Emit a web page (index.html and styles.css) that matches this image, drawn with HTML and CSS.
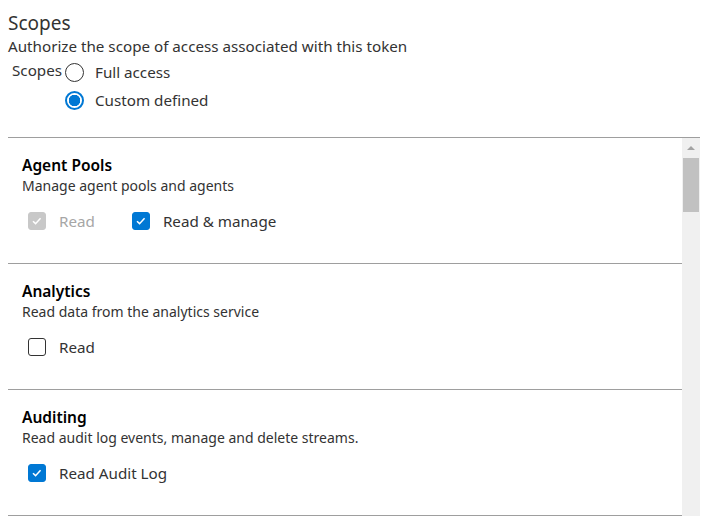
FILE: index.html
```html
<!DOCTYPE html>
<html lang="en">
<head>
  <meta charset="UTF-8">
  <title>Token scopes</title>
  <link rel="stylesheet" href="styles.css">
</head>
<body>
  <div class="scopes-header">
    <h2>Scopes</h2>
    <p class="subtitle">Authorize the scope of access associated with this token</p>
    <div class="scope-choice">
      <span class="choice-label">Scopes</span>
      <div class="radio-group">
        <label class="radio"><span class="radio-dot"></span>Full access</label>
        <label class="radio checked"><span class="radio-dot"></span>Custom defined</label>
      </div>
    </div>
  </div>

  <div class="scope-list">
    <div class="scope-items">
      <div class="scope-item">
        <div class="scope-title">Agent Pools</div>
        <div class="scope-desc">Manage agent pools and agents</div>
        <div class="scope-options">
          <label class="check checked disabled"><span class="box"><svg viewBox="0 0 18 18"><path d="M4.5 9.2l2.9 2.8 5.6-6"/></svg></span>Read</label>
          <label class="check checked"><span class="box"><svg viewBox="0 0 18 18"><path d="M4.5 9.2l2.9 2.8 5.6-6"/></svg></span>Read &amp; manage</label>
        </div>
      </div>
      <div class="scope-item">
        <div class="scope-title">Analytics</div>
        <div class="scope-desc">Read data from the analytics service</div>
        <div class="scope-options">
          <label class="check"><span class="box"></span>Read</label>
        </div>
      </div>
      <div class="scope-item">
        <div class="scope-title">Auditing</div>
        <div class="scope-desc">Read audit log events, manage and delete streams.</div>
        <div class="scope-options">
          <label class="check checked"><span class="box"><svg viewBox="0 0 18 18"><path d="M4.5 9.2l2.9 2.8 5.6-6"/></svg></span>Read Audit Log</label>
        </div>
      </div>
    </div>
    <div class="scrollbar">
      <div class="scroll-arrow"></div>
      <div class="scroll-thumb"></div>
    </div>
  </div>
</body>
</html>
```

FILE: styles.css
```css
body {
  margin: 0;
  padding: 0 9px 0 8px;
  font-family: "Noto Sans", "Open Sans", sans-serif;
  font-size: 15.2px;
  color: #333;
  background: white;
  height: 516px;
  overflow: hidden;
}
h2 {
  margin: 0;
  padding-top: 10px;
  font-size: 19px;
  font-weight: 400;
  line-height: 26px;
}
.subtitle {
  margin: 0;
  line-height: 20px;
}
.scope-choice {
  display: flex;
  margin-top: 4px;
  padding-left: 4px;
}
.choice-label {
  line-height: 20px;
  margin-right: 3px;
}
.radio-group {
  display: flex;
  flex-direction: column;
  gap: 8px;
  padding-top: 2px;
}
.radio {
  display: flex;
  align-items: center;
  line-height: 20px;
}
.radio-dot {
  width: 19px;
  height: 19px;
  border: 1px solid #333;
  border-radius: 50%;
  margin-right: 11px;
  box-sizing: border-box;
}
.radio.checked .radio-dot {
  border: 2px solid #0078d4;
  background: radial-gradient(circle, #0078d4 0 5.5px, white 6px);
}

.scope-list {
  display: flex;
  margin-top: 27px;
  border-top: 1px solid #9e9e9e;
  height: 400px;
}
.scope-items {
  flex: 1;
}
.scope-item {
  height: 126px;
  border-bottom: 1px solid #9e9e9e;
  padding: 16px 14px 0;
  box-sizing: border-box;
}
.scope-title {
  font-size: 15.5px;
  font-weight: 600;
  color: #000;
  line-height: 22px;
}
.scope-desc {
  font-size: 14px;
  line-height: 20px;
}
.scope-options {
  display: flex;
  gap: 37px;
  margin-top: 15px;
  padding-left: 6px;
}
.check {
  display: flex;
  align-items: center;
  line-height: 20px;
}
.box {
  width: 18px;
  height: 18px;
  border: 1px solid #333;
  border-radius: 3px;
  box-sizing: border-box;
  margin-right: 13px;
}
.box svg {
  display: block;
  width: 16px;
  height: 16px;
  fill: none;
  stroke: white;
  stroke-width: 1.7;
}
.check.checked .box {
  background: #0078d4;
  border-color: #0078d4;
}
.check.disabled {
  color: #a6a6a6;
}
.check.disabled .box {
  background: #c8c8c8;
  border-color: #c8c8c8;
}

.scrollbar {
  width: 18px;
  background: #f0f0f0;
  display: flex;
  flex-direction: column;
  align-items: center;
}
.scroll-arrow {
  margin-top: 8px;
  width: 0;
  height: 0;
  border-left: 4px solid transparent;
  border-right: 4px solid transparent;
  border-bottom: 4px solid #a3a3a3;
}
.scroll-thumb {
  margin-top: 8px;
  width: 16px;
  height: 54px;
  background: #c1c1c1;
}
```
